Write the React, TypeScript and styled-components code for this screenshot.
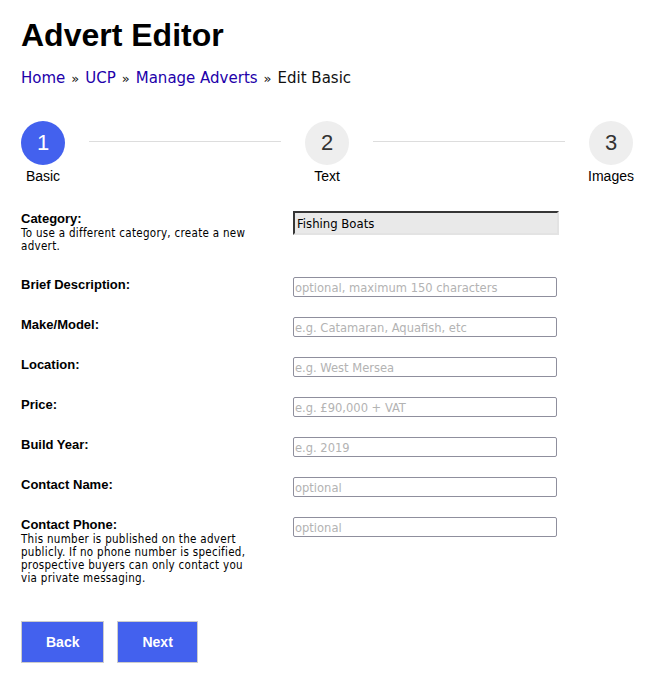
import React from 'react'
import styled, { createGlobalStyle } from 'styled-components'

const GlobalStyle = createGlobalStyle`
  html, body {
    margin: 0;
    padding: 0;
    background: #ffffff;
  }
  body {
    font-family: "Liberation Sans", Arial, sans-serif;
    color: #000;
  }
`

const Page = styled.div`
  width: 612px;
  padding: 13px 22px 20px 21px;
`

const Title = styled.h1`
  margin: 0;
  font-family: "Liberation Sans", Arial, sans-serif;
  font-size: 32px;
  font-weight: 700;
  line-height: 44px;
`

const Breadcrumb = styled.nav`
  margin-top: 11px;
  font-family: "DejaVu Sans", Verdana, sans-serif;
  font-size: 15px;
  line-height: 20px;
  color: #111;

  a {
    color: #2200aa;
    text-decoration: none;
  }
`

const Sep = styled.span`
  margin: 0 6px;
  font-size: 13px;
`

const Stepper = styled.div`
  display: flex;
  align-items: flex-start;
  margin-top: 32px;
`

const Step = styled.div`
  display: flex;
  flex-direction: column;
  align-items: center;
  width: 44px;
`

const StepCircle = styled.div<{ $active?: boolean }>`
  width: 44px;
  height: 44px;
  border-radius: 50%;
  display: flex;
  align-items: center;
  justify-content: center;
  font-size: 22px;
  background: ${({ $active }) => ($active ? '#4361ee' : '#eeeeee')};
  color: ${({ $active }) => ($active ? '#ffffff' : '#333333')};
`

const StepLabel = styled.div`
  margin-top: 3px;
  font-size: 14px;
  line-height: 16px;
  white-space: nowrap;
  color: #000;
`

const StepLine = styled.div`
  flex: 1;
  height: 1px;
  background: #dddddd;
  margin: 20px 24px 0;
`

const Form = styled.form`
  margin-top: 27px;
`

const FieldRow = styled.div<{ $gap?: number }>`
  display: grid;
  grid-template-columns: 272px 266px;
  align-items: start;
  padding-bottom: ${({ $gap }) => $gap ?? 20}px;
`

const LabelBlock = styled.div`
  width: 232px;
`

const Label = styled.label`
  display: block;
  font-size: 13px;
  font-weight: 700;
  line-height: 16px;
`

const Hint = styled.div`
  font-family: "DejaVu Sans Condensed", Tahoma, sans-serif;
  font-size: 11.5px;
  letter-spacing: 0.3px;
  line-height: 13px;
`

const TextInput = styled.input`
  box-sizing: border-box;
  width: 264px;
  height: 20px;
  margin: 0;
  padding: 0 1px;
  border: 1px solid #8f8f9d;
  border-radius: 2px;
  background: #fff;
  font-family: "DejaVu Sans Condensed", Tahoma, sans-serif;
  font-size: 12.8px;
  color: #000;
  outline: none;

  &::placeholder {
    color: #b3b3b3;
    opacity: 1;
  }
`

const ReadOnlyInput = styled(TextInput)`
  width: 266px;
  height: 24px;
  padding: 0 2px;
  border: 2px inset #8a8a8a;
  border-color: #8a8a8a #e3e3e3 #e3e3e3 #8a8a8a;
  border-radius: 0;
  background: #e9e9e9;
  font-size: 13px;
`

const Buttons = styled.div`
  display: flex;
  gap: 13px;
  margin-top: 16px;
`

const Button = styled.button`
  height: 42px;
  padding: 0 24px;
  border: 1px solid #cccccc;
  background: #4361ee;
  color: #ffffff;
  font-family: "Liberation Sans", Arial, sans-serif;
  font-size: 14px;
  font-weight: 700;
  cursor: pointer;
`

const fields = [
  { label: 'Brief Description:', placeholder: 'optional, maximum 150 characters' },
  { label: 'Make/Model:', placeholder: 'e.g. Catamaran, Aquafish, etc' },
  { label: 'Location:', placeholder: 'e.g. West Mersea' },
  { label: 'Price:', placeholder: 'e.g. £90,000 + VAT' },
  { label: 'Build Year:', placeholder: 'e.g. 2019' },
  { label: 'Contact Name:', placeholder: 'optional' },
]

export default function App() {
  return (
    <Page>
      <GlobalStyle />
      <Title>Advert Editor</Title>
      <Breadcrumb>
        <a href="#">Home</a>
        <Sep>»</Sep>
        <a href="#">UCP</a>
        <Sep>»</Sep>
        <a href="#">Manage Adverts</a>
        <Sep>»</Sep>
        Edit Basic
      </Breadcrumb>

      <Stepper>
        <Step>
          <StepCircle $active>1</StepCircle>
          <StepLabel>Basic</StepLabel>
        </Step>
        <StepLine />
        <Step>
          <StepCircle>2</StepCircle>
          <StepLabel>Text</StepLabel>
        </Step>
        <StepLine />
        <Step>
          <StepCircle>3</StepCircle>
          <StepLabel>Images</StepLabel>
        </Step>
      </Stepper>

      <Form onSubmit={(e) => e.preventDefault()}>
        <FieldRow $gap={24}>
          <LabelBlock>
            <Label>Category:</Label>
            <Hint>To use a different category, create a new advert.</Hint>
          </LabelBlock>
          <ReadOnlyInput value="Fishing Boats" readOnly />
        </FieldRow>

        {fields.map((f) => (
          <FieldRow key={f.label}>
            <LabelBlock>
              <Label>{f.label}</Label>
            </LabelBlock>
            <TextInput placeholder={f.placeholder} />
          </FieldRow>
        ))}

        <FieldRow>
          <LabelBlock>
            <Label>Contact Phone:</Label>
            <Hint>
              This number is published on the advert publicly. If no phone number is
              specified, prospective buyers can only contact you via private messaging.
            </Hint>
          </LabelBlock>
          <TextInput placeholder="optional" />
        </FieldRow>

        <Buttons>
          <Button type="button">Back</Button>
          <Button type="submit">Next</Button>
        </Buttons>
      </Form>
    </Page>
  )
}
